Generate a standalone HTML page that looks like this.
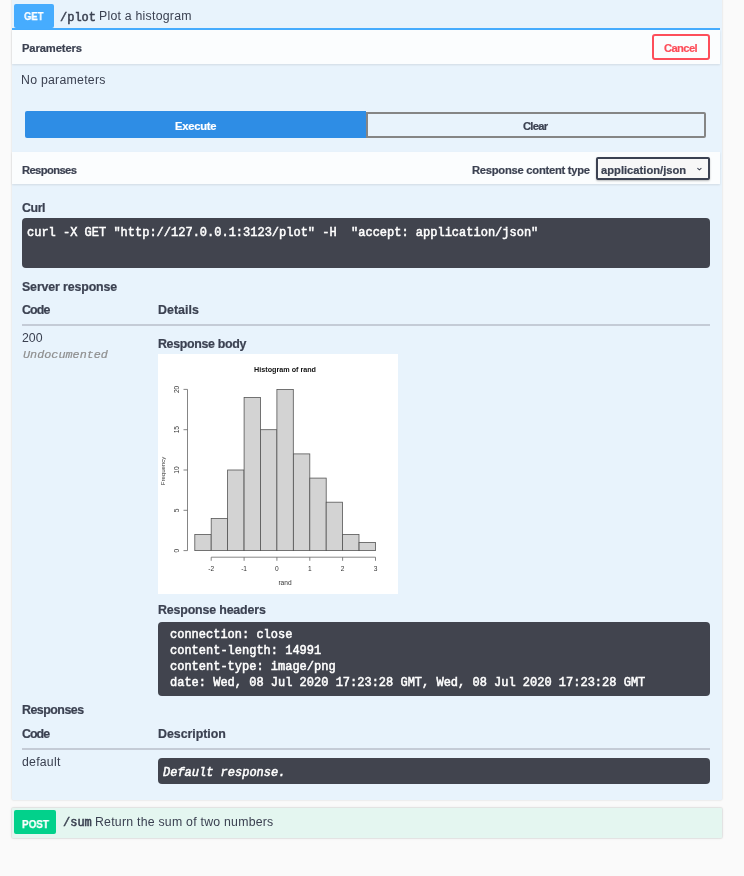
<!DOCTYPE html>
<html><head><meta charset="utf-8">
<style>
*{box-sizing:border-box;margin:0;padding:0}
html,body{width:744px;height:876px;overflow:hidden;background:#fafafa;font-family:"Liberation Sans",sans-serif;color:#3b4151}
.a{position:absolute;white-space:nowrap;will-change:transform}
.ob{left:12px;top:-10px;width:710px;height:810px;background:#e8f3fc;border-radius:1px;box-shadow:0 0 2px rgba(0,0,0,.18)}
.b{font-weight:bold}
.mono{font-family:"Liberation Mono",monospace;font-weight:normal;-webkit-text-stroke:0.5px currentColor;font-size:12px;line-height:16px}
.hdr{left:12px;width:708px;background:#fbfdfe;box-shadow:0 1px 2px rgba(0,0,0,.1)}
.h1{font-weight:bold;font-size:11.2px;line-height:14px;-webkit-text-stroke:0.2px currentColor}
.h2{font-weight:bold;font-size:12.4px;line-height:16px;-webkit-text-stroke:0.2px currentColor}
.t{font-size:12.3px;line-height:16px}
.pre{background:#41444e;border-radius:4px}
.line{background:#c4cbd6}
</style></head><body>
<div class="a ob"></div>
<div class="a" style="left:14px;top:4px;width:40px;height:24px;background:#46acfe;border-radius:2px"></div>
<div class="a b" style="left:24px;top:9px;font-size:11.6px;line-height:14px;color:#fff;transform:scaleX(0.82);transform-origin:0 0;-webkit-text-stroke:0.25px #fff">GET</div>
<div class="a mono" style="left:60px;top:10px">/plot</div>
<div class="a t" style="left:99px;top:8px;letter-spacing:0.24px">Plot a histogram</div>
<div class="a" style="left:12px;top:28px;width:708px;height:2px;background:#46acfe"></div>
<div class="a hdr" style="top:30px;height:34px"></div>
<div class="a h1" style="left:22px;top:41px;letter-spacing:-0.1px">Parameters</div>
<div class="a" style="left:652px;top:34px;width:58px;height:26px;border:2px solid #fd4e5a;border-radius:3px"></div>
<div class="a h1" style="left:664px;top:41px;color:#fd4e5a;letter-spacing:-0.6px">Cancel</div>
<div class="a t" style="left:21px;top:72px;letter-spacing:0.26px">No parameters</div>
<div class="a" style="left:25px;top:111px;width:341px;height:27px;background:#2e8de5;border-radius:2px 0 0 2px"></div>
<div class="a h1" style="left:175px;top:119px;color:#fff;letter-spacing:-0.25px">Execute</div>
<div class="a" style="left:366px;top:112px;width:340px;height:26px;border:2px solid #858585;border-radius:0 2px 2px 0"></div>
<div class="a h1" style="left:523px;top:119px;letter-spacing:-0.75px">Clear</div>
<div class="a hdr" style="top:152px;height:32px"></div>
<div class="a h1" style="left:22px;top:163px;letter-spacing:-0.6px">Responses</div>
<div class="a h1" style="left:472px;top:163px;letter-spacing:-0.25px">Response content type</div>
<div class="a" style="left:596px;top:157px;width:114px;height:23px;border:2px solid #3b4151;border-radius:2px;background:#f7f7f7;box-shadow:0 1px 2px rgba(0,0,0,.25)"></div>
<div class="a h1" style="left:601px;top:163px;letter-spacing:0px">application/json</div>
<svg class="a" style="left:695px;top:166px" width="8" height="6" viewBox="0 0 8 6"><path d="M2.4 2.2L4.4 3.9L6.4 2.2" stroke="#3b4151" stroke-width="1.1" fill="none"/></svg>
<div class="a h2" style="left:22px;top:200px;letter-spacing:-0.43px">Curl</div>
<div class="a pre" style="left:22px;top:218px;width:688px;height:50px"></div>
<div class="a mono" style="left:27px;top:225px;color:#fff;white-space:pre">curl -X GET "http://127.0.0.1:3123/plot" -H  "accept: application/json"</div>
<div class="a h2" style="left:22px;top:279px;letter-spacing:-0.14px">Server response</div>
<div class="a h2" style="left:22px;top:302px;letter-spacing:-0.85px">Code</div>
<div class="a h2" style="left:158px;top:302px;letter-spacing:0.03px">Details</div>
<div class="a line" style="left:22px;top:324px;width:688px;height:2px"></div>
<div class="a t" style="left:22px;top:330px;letter-spacing:0px">200</div>
<div class="a" style="left:23px;top:348px;font-family:'Liberation Mono',monospace;font-style:italic;font-size:11.8px;color:#8e8e8e;-webkit-text-stroke:0.2px #8e8e8e;line-height:14px">Undocumented</div>
<div class="a h2" style="left:158px;top:336px;letter-spacing:-0.33px">Response body</div>
<svg class="a" style="left:158px;top:354px" width="240" height="240" viewBox="0 0 240 240">
<rect width="240" height="240" fill="#fff"/>
<g fill="#d3d3d3" stroke="#555" stroke-width="0.8">
<rect x="36.8" y="180.5" width="16.4" height="16.1"/>
<rect x="53.2" y="164.4" width="16.4" height="32.2"/>
<rect x="69.6" y="116.0" width="16.4" height="80.6"/>
<rect x="86.1" y="43.5" width="16.4" height="153.1"/>
<rect x="102.5" y="75.7" width="16.4" height="120.9"/>
<rect x="118.9" y="35.4" width="16.4" height="161.2"/>
<rect x="135.4" y="99.9" width="16.4" height="96.7"/>
<rect x="151.8" y="124.1" width="16.4" height="72.5"/>
<rect x="168.2" y="148.2" width="16.4" height="48.4"/>
<rect x="184.6" y="180.5" width="16.4" height="16.1"/>
<rect x="201.1" y="188.5" width="16.4" height="8.1"/>
</g>
<path d="M29.5 35.4V196.6M25.5 196.6H29.5M25.5 156.3H29.5M25.5 116.0H29.5M25.5 75.7H29.5M25.5 35.4H29.5M53.2 203.2H217.5M53.2 203.2V206.8M86.1 203.2V206.8M118.9 203.2V206.8M151.8 203.2V206.8M184.6 203.2V206.8M217.5 203.2V206.8" stroke="#666" stroke-width="0.8" fill="none"/>
<g font-family="Liberation Sans" font-size="6.6" fill="#333" text-anchor="middle">
<text x="53.2" y="217">-2</text>
<text x="86.1" y="217">-1</text>
<text x="118.9" y="217">0</text>
<text x="151.8" y="217">1</text>
<text x="184.6" y="217">2</text>
<text x="217.5" y="217">3</text>
<text transform="translate(21.3 196.6) rotate(-90)">0</text>
<text transform="translate(21.3 156.3) rotate(-90)">5</text>
<text transform="translate(21.3 116.0) rotate(-90)">10</text>
<text transform="translate(21.3 75.7) rotate(-90)">15</text>
<text transform="translate(21.3 35.4) rotate(-90)">20</text>
<text x="127" y="231">rand</text>
<text transform="translate(6.8 117) rotate(-90)" font-size="6">Frequency</text>
</g>
<text x="96.1" y="17.6" font-family="Liberation Sans" font-weight="bold" font-size="7.2" fill="#111">Histogram of rand</text>
</svg>

<div class="a h2" style="left:158px;top:602px;letter-spacing:-0.16px">Response headers</div>
<div class="a pre" style="left:158px;top:622px;width:552px;height:74px"></div>
<div class="a mono" style="left:170px;top:627px;color:#fff;white-space:pre">connection: close
content-length: 14991
content-type: image/png
date: Wed, 08 Jul 2020 17:23:28 GMT, Wed, 08 Jul 2020 17:23:28 GMT</div>
<div class="a h2" style="left:22px;top:702px;letter-spacing:-0.5px">Responses</div>
<div class="a h2" style="left:22px;top:726px;letter-spacing:-0.95px">Code</div>
<div class="a h2" style="left:158px;top:726px;letter-spacing:-0.03px">Description</div>
<div class="a line" style="left:22px;top:748px;width:688px;height:2px"></div>
<div class="a t" style="left:22px;top:754px;letter-spacing:0.23px">default</div>
<div class="a pre" style="left:158px;top:758px;width:552px;height:26px"></div>
<div class="a mono" style="left:163px;top:765px;color:#fff;font-style:italic">Default response.</div>
<div class="a" style="left:12px;top:808px;width:710px;height:30px;background:#e4f6f0;border-radius:1px;box-shadow:0 0 0 1px rgba(0,0,0,.05),0 0 3px rgba(0,0,0,.12)"></div>
<div class="a" style="left:14px;top:810px;width:42px;height:24px;background:#02d18b;border-radius:2px"></div>
<div class="a b" style="left:22px;top:816.5px;font-size:11.5px;line-height:14px;color:#fff;transform:scaleX(0.86);transform-origin:0 0;-webkit-text-stroke:0.25px #fff">POST</div>
<div class="a mono" style="left:63px;top:815px">/sum</div>
<div class="a t" style="left:95px;top:814px;letter-spacing:0.24px">Return the sum of two numbers</div>
</body></html>
